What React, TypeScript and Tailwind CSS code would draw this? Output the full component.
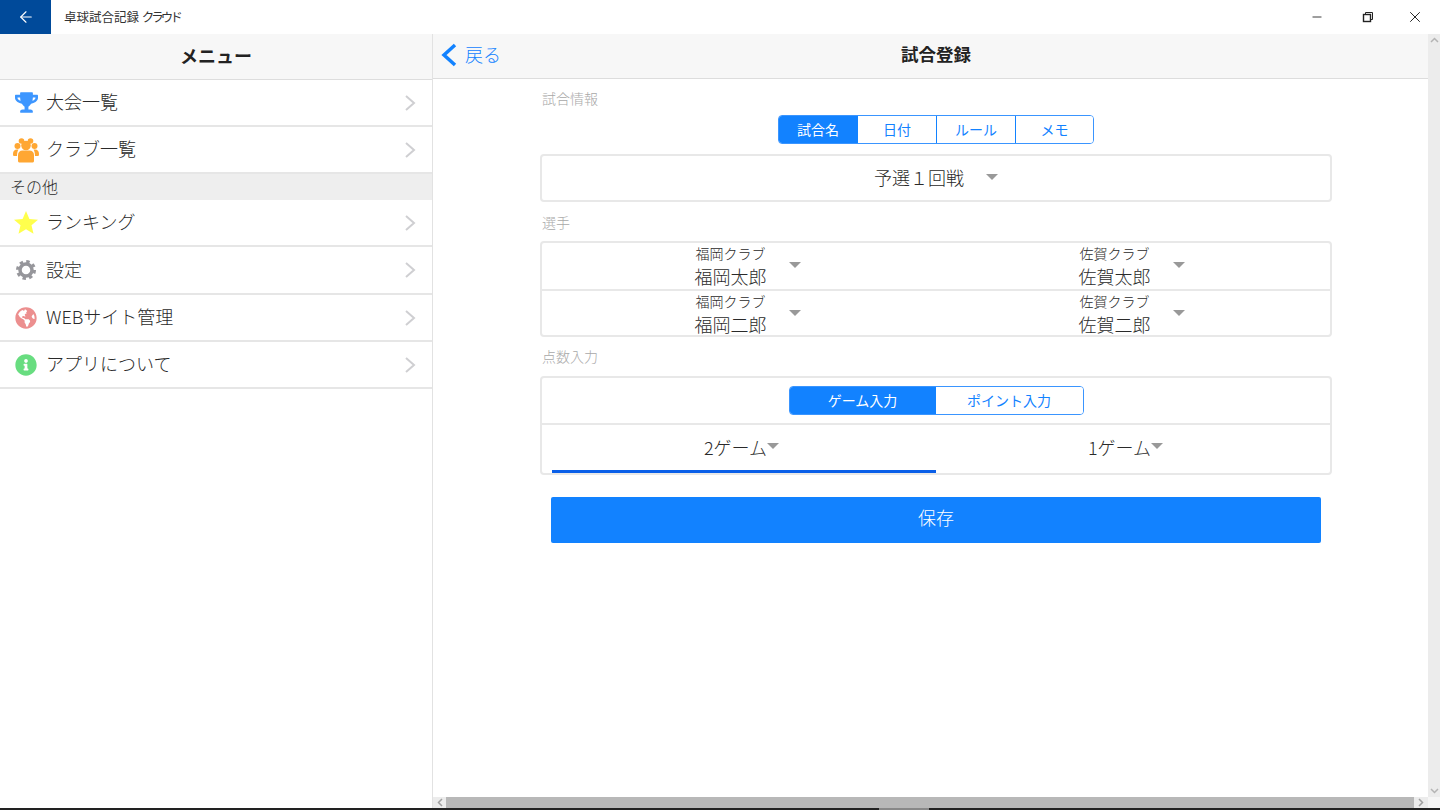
import React from "react"
import { ArrowLeft, Minus, X } from "lucide-react"
import { FaTrophy, FaGlobeAmericas, FaInfoCircle } from "react-icons/fa"

const Chevron = () => (
  <svg width="12" height="18" viewBox="0 0 12 18" fill="none" className="ml-auto mr-[16px]">
    <path d="M2 2l8 7-8 7" stroke="#cfcfd2" strokeWidth="2" />
  </svg>
)

const Caret = ({ className = "" }: { className?: string }) => (
  <svg width="12" height="6" viewBox="0 0 12 6" className={className}>
    <path d="M0 0h12L6 6z" fill="#999999" />
  </svg>
)

const People = () => (
  <svg width="26" height="26" viewBox="0 0 26 26" fill="#ffa733">
    <circle cx="4.500" cy="9" r="3" />
    <circle cx="21.500" cy="9" r="3" />
    <circle cx="8.500" cy="4" r="2.800" />
    <circle cx="17.500" cy="4" r="2.800" />
    <circle cx="13" cy="8.500" r="4.800" />
    <path d="M0 17c0-3 1.500-4.500 4-4.500h1.500C4.500 14 4 16 4 19H1c-.6 0-1-.5-1-2zM26 17c0-3-1.500-4.500-4-4.500h-1.500c1 1.500 1.500 4 1.500 6.500h3c.6 0 1-.5 1-2z" />
    <path d="M5 24v-6c0-3 2-4.500 4.500-4.500h7c2.500 0 4.500 1.500 4.500 4.500v6c0 1-1 1.500-2 1.500H7c-1 0-2-.5-2-1.500z" />
  </svg>
)

const Star = () => (
  <svg width="24" height="23" viewBox="0 0 24 23" fill="#ffff4d">
    <path d="M12 0l3.400 8 8.600.7-6.500 5.600 2 8.400L12 18.200 4.500 22.700l2-8.400L0 8.700 8.600 8z" />
  </svg>
)

const Gear = () => (
  <svg width="22" height="22" viewBox="0 0 22 22" fill="none" stroke="#96969b">
    <circle cx="11" cy="11" r="6" strokeWidth="3.500" />
    <circle cx="11" cy="11" r="8.500" strokeWidth="3" strokeDasharray="3.400 3.275" />
  </svg>
)

const MenuRow = ({ icon, label, height }: { icon: React.ReactNode, label: string, height: string }) => (
  <div className={`flex items-center border-b-2 border-[#e6e6e6] ${height}`}>
    <div className="w-[46px] flex justify-center pl-[6px] shrink-0">{icon}</div>
    <span className="text-[18px] leading-none text-[#2a2a2a] font-light pb-[3px]">{label}</span>
    <Chevron />
  </div>
)

const SectionLabel = ({ text, className }: { text: string, className: string }) => (
  <p className={`pl-[2px] text-[14px] leading-[20px] text-[#a8a8a8] font-light ${className}`}>{text}</p>
)

const Segment = ({ label, active, width, divider }: { label: string, active?: boolean, width: string, divider?: boolean }) => (
  <div className={`flex items-center justify-center text-[14px] ${width} ${active ? "bg-[#1282ff] text-white" : "bg-white text-[#1282ff]"} ${divider ? "border-l border-[#1282ff]" : ""}`}>
    {label}
  </div>
)

const PlayerCell = ({ club, name }: { club: string, name: string }) => (
  <div className="flex-1 flex items-center justify-center pr-[15px]">
    <div className="flex flex-col items-center self-start w-[120px] ml-[-2px]">
      <span className="text-[14px] leading-[18px] text-[#2a2a2a] font-light mt-[1px]">{club}</span>
      <span className="text-[18px] leading-[25px] text-[#2a2a2a] font-light mt-[2px]">{name}</span>
    </div>
    <Caret className="mb-[3px] ml-[-2px]" />
  </div>
)

export default function App() {
  return (
    <div className="w-[1440px] h-[810px] overflow-hidden flex flex-col bg-white font-['Noto_Sans_CJK_JP',sans-serif]">
      {/* title bar */}
      <div className="h-[34px] flex items-center shrink-0">
        <div className="w-[51px] h-full bg-[#004a9a] flex items-center justify-center">
          <ArrowLeft size={18} color="#ffffff" strokeWidth={1.5} />
        </div>
        <span className="ml-[13px] text-[12.500px] text-[#333333]">
          卓球試合記録 <span className="tracking-[-3px]">クラウド</span>
        </span>
        <div className="ml-auto flex items-center text-[#222222]">
          <Minus size={14} strokeWidth={1.500} className="mr-[38px]" />
          <svg width="12" height="12" viewBox="0 0 12 12" fill="none" stroke="#222222" className="mr-[32px]">
            <rect x="1.500" y="3.500" width="7" height="7" strokeWidth="1.400" />
            <path d="M3.500 3.500V1.500h7v7H8.500" />
          </svg>
          <X size={18} strokeWidth={1.300} className="mr-[16px]" />
        </div>
      </div>

      <div className="flex-1 flex min-h-0">
        {/* sidebar */}
        <div className="w-[433px] shrink-0 flex flex-col border-r border-[#e2e2e2]">
          <div className="h-[46px] bg-[#f7f7f7] border-b border-[#dddddd] flex items-center justify-center text-[18px] font-bold text-[#222222] pb-[2px]">
            メニュー
          </div>
          <MenuRow height="h-[47px]" label="大会一覧" icon={<FaTrophy size={23} color="#3d96ff" />} />
          <MenuRow height="h-[47px]" label="クラブ一覧" icon={<People />} />
          <div className="h-[26px] bg-[#eeeeee] pl-[10px] pb-[3px] flex items-center text-[16px] text-[#2a2a2a] font-light">その他</div>
          <MenuRow height="h-[47px]" label="ランキング" icon={<Star />} />
          <MenuRow height="h-[48px]" label="設定" icon={<Gear />} />
          <MenuRow height="h-[47px]" label="WEBサイト管理" icon={<FaGlobeAmericas size={22} color="#ec8f8f" />} />
          <MenuRow height="h-[47px]" label="アプリについて" icon={<FaInfoCircle size={22} color="#68dd80" />} />
        </div>

        {/* main */}
        <div className="flex-1 flex flex-col min-w-0">
          <div className="flex-1 flex min-h-0">
            <div className="flex-1 min-w-0">
              <div className="h-[45px] bg-[#f7f7f7] border-b border-[#dddddd] flex items-center relative pb-[2px]">
                <svg width="16" height="24" viewBox="0 0 16 24" fill="none" className="ml-[8px]">
                  <path d="M14 2L3 12l11 10" stroke="#1282ff" strokeWidth="3.500" />
                </svg>
                <span className="ml-[8px] mb-[2px] text-[18px] text-[#1282ff] font-light">戻る</span>
                <span className="absolute left-0 right-0 pl-[11px] mb-[2px] text-center text-[17.500px] font-bold text-[#222222]">試合登録</span>
              </div>

              <div className="w-[792px] ml-[107px]">
                <SectionLabel text="試合情報" className="mt-[9px]" />
                <div className="flex justify-end mt-[7px] mr-[238px]">
                  <div className="flex h-[29px] w-[316px] rounded-[4px] border border-[#3a95ff] overflow-hidden">
                    <Segment label="試合名" active width="w-[78px]" />
                    <Segment label="日付" width="w-[79px]" divider />
                    <Segment label="ルール" width="w-[79px]" divider />
                    <Segment label="メモ" width="w-[78px]" divider />
                  </div>
                </div>

                <div className="mt-[10px] h-[48px] rounded-[4px] border-2 border-[#e8e8e8] flex items-center justify-center pb-[1px]">
                  <span className="text-[18px] text-[#2a2a2a] font-light">予選１回戦</span>
                  <Caret className="ml-[22px] mb-[2px]" />
                </div>

                <SectionLabel text="選手" className="mt-[10px]" />
                <div className="mt-[9px] h-[96px] rounded-[4px] border-2 border-[#e8e8e8] flex flex-col">
                  <div className="flex-1 flex px-[10px] border-b-2 border-[#e8e8e8]">
                    <PlayerCell club="福岡クラブ" name="福岡太郎" />
                    <PlayerCell club="佐賀クラブ" name="佐賀太郎" />
                  </div>
                  <div className="flex-1 flex px-[10px]">
                    <PlayerCell club="福岡クラブ" name="福岡二郎" />
                    <PlayerCell club="佐賀クラブ" name="佐賀二郎" />
                  </div>
                </div>

                <SectionLabel text="点数入力" className="mt-[9px]" />
                <div className="mt-[10px] h-[99px] rounded-[4px] border-2 border-[#e8e8e8] flex flex-col">
                  <div className="h-[47px] shrink-0 border-b-2 border-[#e8e8e8] flex justify-center items-center">
                    <div className="flex h-[29px] w-[295px] rounded-[4px] border border-[#3a95ff] overflow-hidden">
                      <Segment label="ゲーム入力" active width="w-[146px]" />
                      <Segment label="ポイント入力" width="w-[147px]" />
                    </div>
                  </div>
                  <div className="flex-1 flex px-[10px]">
                    <div className="flex-1 flex items-center justify-center border-b-[3px] border-[#0a5fe8] pr-[5px]">
                      <span className="text-[18px] text-[#2a2a2a] font-light">2ゲーム</span>
                      <Caret className="mb-[3px]" />
                    </div>
                    <div className="flex-1 flex items-center justify-center pb-[3px] pr-[5px]">
                      <span className="text-[18px] text-[#2a2a2a] font-light">1ゲーム</span>
                      <Caret className="mb-[3px]" />
                    </div>
                  </div>
                </div>

                <div className="mx-[11px] mt-[22px] h-[46px] rounded-[2px] bg-[#1282ff] flex items-center justify-center text-[18px] text-white font-light pb-[6px]">
                  保存
                </div>
              </div>
            </div>

            {/* vertical scrollbar */}
            <div className="w-[12px] shrink-0 bg-[#ececec] flex flex-col items-center justify-between py-[3px]">
              <svg width="9" height="6" viewBox="0 0 9 6" fill="none" stroke="#b4b4b4" strokeWidth="1.500"><path d="M1 5l3.500-3.500L8 5" /></svg>
              <svg width="9" height="6" viewBox="0 0 9 6" fill="none" stroke="#b4b4b4" strokeWidth="1.500"><path d="M1 1l3.500 3.500L8 1" /></svg>
            </div>
          </div>

          {/* horizontal scrollbar */}
          <div className="h-[11px] shrink-0 flex items-center">
            <div className="w-[13px] h-full bg-[#ececec] flex justify-center items-center">
              <svg width="6" height="9" viewBox="0 0 6 9" fill="none" stroke="#a0a0a0" strokeWidth="1.500"><path d="M5 1L1.500 4.500 5 8" /></svg>
            </div>
            <div className="flex-1 h-full bg-[#b8b8b8]" />
            <div className="w-[14px] h-full bg-[#ececec] flex justify-center items-center">
              <svg width="6" height="9" viewBox="0 0 6 9" fill="none" stroke="#a0a0a0" strokeWidth="1.500"><path d="M1 1l3.500 3.500L1 8" /></svg>
            </div>
            <div className="w-[12px] h-full bg-[#f6f6f6]" />
          </div>
        </div>
      </div>

      {/* window edge with the grey notch */}
      <div className="h-[2px] shrink-0 flex">
        <div className="w-[879px] bg-[#222222]" />
        <div className="w-[50px] bg-[#888888]" />
        <div className="flex-1 bg-[#222222]" />
      </div>
    </div>
  )
}
